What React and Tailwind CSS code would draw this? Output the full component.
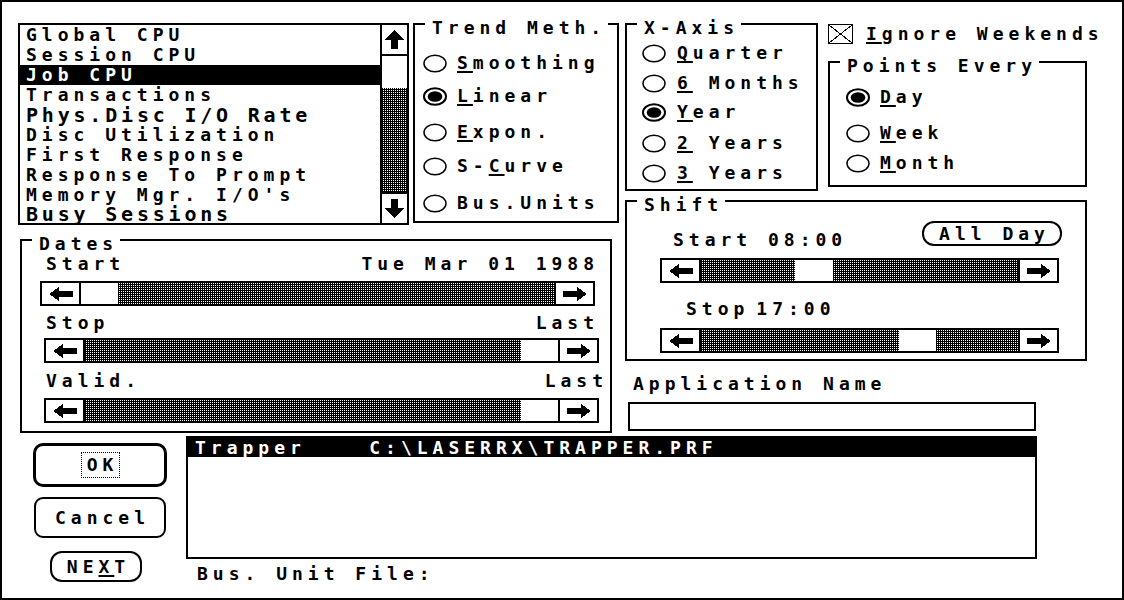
import React from "react";

const dither = "bg-[image:conic-gradient(#fff_0_25%,#000_0)] bg-[length:2px_2px]";

const listItems = [
  { label: "Global CPU" },
  { label: "Session CPU" },
  { label: "Job CPU", selected: true },
  { label: "Transactions" },
  { label: "Phys.Disc I/O Rate", big: true },
  { label: "Disc Utilization" },
  { label: "First Response" },
  { label: "Response To Prompt" },
  { label: "Memory Mgr. I/O's" },
  { label: "Busy Sessions", big: true, last: true },
];

const trendOptions = [
  { label: "Smoothing", u: 0, mt: "mt-[28px]" },
  { label: "Linear", u: 0, mt: "mt-[13px]", on: true },
  { label: "Expon.", u: 0, mt: "mt-[16px]" },
  { label: "S-Curve", u: 2, mt: "mt-[14px]" },
  { label: "Bus.Units", mt: "mt-[17px]" },
];

const axisOptions = [
  { label: "Quarter", u: 0, mt: "mt-[18px]" },
  { label: "6 Months", u: 0, mt: "mt-[10px]" },
  { label: "Year", u: 0, mt: "mt-[9px]", on: true },
  { label: "2 Years", u: 0, mt: "mt-[11px]" },
  { label: "3 Years", u: 0, mt: "mt-[10px]" },
];

const pointOptions = [
  { label: "Day", u: 0, mt: "mt-[24px]", on: true },
  { label: "Week", u: 0, mt: "mt-[16px]" },
  { label: "Month", u: 0, mt: "mt-[10px]" },
];

function HArrow({ dir }) {
  return (
    <svg width="24" height="14" viewBox="0 0 24 14" shapeRendering="crispEdges" className={dir === "right" ? "rotate-180" : ""}>
      <polygon points="0,7 10,0 10,4 24,4 24,10 10,10 10,14" fill="black" />
    </svg>
  );
}

function VArrow({ dir }) {
  return (
    <svg width="19" height="19" viewBox="0 0 19 19" shapeRendering="crispEdges" className={dir === "down" ? "rotate-180" : ""}>
      <polygon points="9.5,0 19,10 13,10 13,19 6,19 6,10 0,10" fill="black" />
    </svg>
  );
}

function Radio({ on }) {
  return (
    <svg width="24" height="19" viewBox="0 0 24 19" className="shrink-0">
      <ellipse cx="12" cy="9.5" rx="11" ry="8.3" fill="white" stroke="black" strokeWidth={on ? 2 : 1.5} />
      {on ? <ellipse cx="12" cy="9.5" rx="7.3" ry="5.3" fill="black" /> : null}
    </svg>
  );
}

function Mnemonic({ text, u }) {
  if (u == null) return <span>{text}</span>;
  return (
    <span>
      {text.slice(0, u)}
      <span className="underline decoration-2 underline-offset-[2px]">{text[u]}</span>
      {text.slice(u + 1)}
    </span>
  );
}

function RadioRow({ option, gap }) {
  return (
    <div className={`flex h-[20px] items-center ${option.mt}`}>
      <Radio on={option.on} />
      <span className={`${gap} whitespace-pre leading-[20px]`}>
        <Mnemonic text={option.label} u={option.u} />
      </span>
    </div>
  );
}

function Group({ title, className, children }) {
  return (
    <div className={`relative border-2 border-black ${className}`}>
      <span className="absolute left-[10px] top-[-7px] whitespace-pre bg-white pl-[7px] pr-[2px] leading-[20px]">{title}</span>
      {children}
    </div>
  );
}

function Slider({ className, children }) {
  return (
    <div className={`flex h-[25px] border-2 border-black ${className}`}>
      <div className="flex w-[39px] items-center justify-center border-r-2 border-black">
        <HArrow dir="left" />
      </div>
      <div className="flex flex-1">{children}</div>
      <div className="flex w-[39px] items-center justify-center border-l-2 border-black">
        <HArrow dir="right" />
      </div>
    </div>
  );
}

export default function App() {
  return (
    <div className="flex h-[600px] w-[1124px] flex-col overflow-hidden border-2 border-black bg-white font-['DejaVu_Sans_Mono',monospace] text-[18px] font-bold leading-[20px] tracking-[5px] text-black">
      <div className="flex pl-[16px] pt-[21px]">
        {/* left area */}
        <div className="flex w-[601px] flex-col">
          <div className="flex items-start">
            <div className="flex h-[202px] w-[391px] border-2 border-black">
              <div className="flex-1 overflow-hidden">
                {listItems.map((item) => (
                  <div
                    key={item.label}
                    className={`whitespace-pre pl-[6px] ${item.last ? "h-[18px] leading-[18px]" : "h-[20px] leading-[20px]"} ${item.selected ? "bg-black text-white" : ""} ${item.big ? "text-[20px] tracking-[3.8px]" : ""}`}
                  >
                    {item.label}
                  </div>
                ))}
              </div>
              <div className="flex w-[27px] flex-col border-l-2 border-black">
                <div className="flex h-[31px] items-center justify-center border-b-2 border-black">
                  <VArrow dir="up" />
                </div>
                <div className="h-[32px]" />
                <div className={`flex-1 ${dither}`} />
                <div className="flex h-[31px] items-center justify-center border-t-2 border-black">
                  <VArrow dir="down" />
                </div>
              </div>
            </div>

            <Group title="Trend Meth." className="ml-[4px] h-[200px] w-[206px] pl-[8px]">
              {trendOptions.map((option) => (
                <RadioRow key={option.label} option={option} gap="ml-[10px]" />
              ))}
            </Group>
          </div>

          <Group title="Dates" className="ml-[2px] mt-[14px] h-[194px] w-[592px]">
            <div className="ml-[24px] mt-[13px] flex h-[20px] w-[553px] justify-between">
              <span>Start</span>
              <span>Tue Mar 01 1988</span>
            </div>
            <Slider className="ml-[18px] mt-[7px] w-[555px]">
              <div className="w-[37px]" />
              <div className={`flex-1 ${dither}`} />
            </Slider>
            <div className="ml-[24px] mt-[7px] flex h-[20px] w-[553px] justify-between">
              <span>Stop</span>
              <span>Last</span>
            </div>
            <Slider className="ml-[22px] mt-[5px] w-[555px]">
              <div className={`flex-1 ${dither}`} />
              <div className="w-[37px]" />
            </Slider>
            <div className="ml-[24px] mt-[8px] flex h-[20px] w-[562px] justify-between">
              <span>Valid.</span>
              <span>Last</span>
            </div>
            <Slider className="ml-[22px] mt-[7px] w-[555px]">
              <div className={`flex-1 ${dither}`} />
              <div className="w-[37px]" />
            </Slider>
          </Group>
        </div>

        {/* right area */}
        <div className="ml-[6px] flex flex-col">
          <div className="flex items-start">
            <Group title="X-Axis" className="h-[168px] w-[193px] pl-[15px]">
              {axisOptions.map((option) => (
                <RadioRow key={option.label} option={option} gap="ml-[11px]" />
              ))}
            </Group>
            <div className="ml-[10px] flex flex-col">
              <div className="mt-[1px] flex h-[20px] items-center">
                <svg width="25" height="20" viewBox="0 0 25 20" shapeRendering="crispEdges">
                  <rect x="0.5" y="0.5" width="24" height="19" fill="white" stroke="black" strokeWidth="1" />
                  <line x1="1" y1="1" x2="24" y2="19" stroke="black" strokeWidth="1" />
                  <line x1="24" y1="1" x2="1" y2="19" stroke="black" strokeWidth="1" />
                </svg>
                <span className="ml-[13px] whitespace-pre">
                  <Mnemonic text="Ignore Weekends" u={0} />
                </span>
              </div>
              <Group title="Points Every" className="mt-[17px] h-[126px] w-[259px] pl-[16px]">
                {pointOptions.map((option) => (
                  <RadioRow key={option.label} option={option} gap="ml-[10px]" />
                ))}
              </Group>
            </div>
          </div>

          <Group title="Shift" className="mt-[9px] h-[161px] w-[462px]">
            <div className="mt-[19px] flex items-start">
              <span className="ml-[46px] mt-[9px] whitespace-pre">Start 08:00</span>
              <div className="ml-auto mr-[23px] flex h-[25px] w-[140px] items-center justify-center rounded-[12px] border-2 border-black pl-[5px]">
                All Day
              </div>
            </div>
            <Slider className="ml-[33px] mt-[8px] w-[399px]">
              <div className={`w-[94px] ${dither}`} />
              <div className="w-[38px]" />
              <div className={`flex-1 ${dither}`} />
            </Slider>
            <div className="ml-[59px] mt-[16px] flex h-[20px]">
              <span>Stop</span>
              <span className="ml-[7px]">17:00</span>
            </div>
            <Slider className="ml-[33px] mt-[9px] w-[399px]">
              <div className={`w-[198px] ${dither}`} />
              <div className="w-[37px]" />
              <div className={`flex-1 ${dither}`} />
            </Slider>
          </Group>

          <div className="ml-[8px] mt-[13px] h-[20px] whitespace-pre">Application Name</div>
          <div className="ml-[3px] mt-[8px] h-[29px] w-[408px] border-2 border-black" />
        </div>
      </div>

      <div className="mt-[3px] flex">
        <div className="ml-[31px] flex w-[134px] flex-col pt-[7px]">
          <div className="flex h-[44px] w-[134px] items-center justify-center rounded-[10px] border-[3px] border-black">
            <span className="flex h-[26px] w-[39px] items-center justify-center border border-dotted border-black pl-[5px]">OK</span>
          </div>
          <div className="ml-[1px] mt-[10px] flex h-[41px] w-[132px] items-center justify-center rounded-[9px] border-2 border-black pl-[5px]">
            Cancel
          </div>
          <div className="ml-[17px] mt-[13px] flex h-[31px] w-[92px] items-center justify-center rounded-[12px] border-2 border-black pl-[5px]">
            <Mnemonic text="NEXT" u={2} />
          </div>
        </div>

        <div className="ml-[19px] flex flex-col">
          <div className="h-[123px] w-[851px] border-2 border-black">
            <div className="h-[19px] whitespace-pre bg-black pl-[7px] leading-[19px] text-white">
              {"Trapper    C:\\LASERRX\\TRAPPER.PRF"}
            </div>
          </div>
          <div className="ml-[11px] mt-[5px] h-[20px] whitespace-pre">Bus. Unit File:</div>
        </div>
      </div>
    </div>
  );
}
